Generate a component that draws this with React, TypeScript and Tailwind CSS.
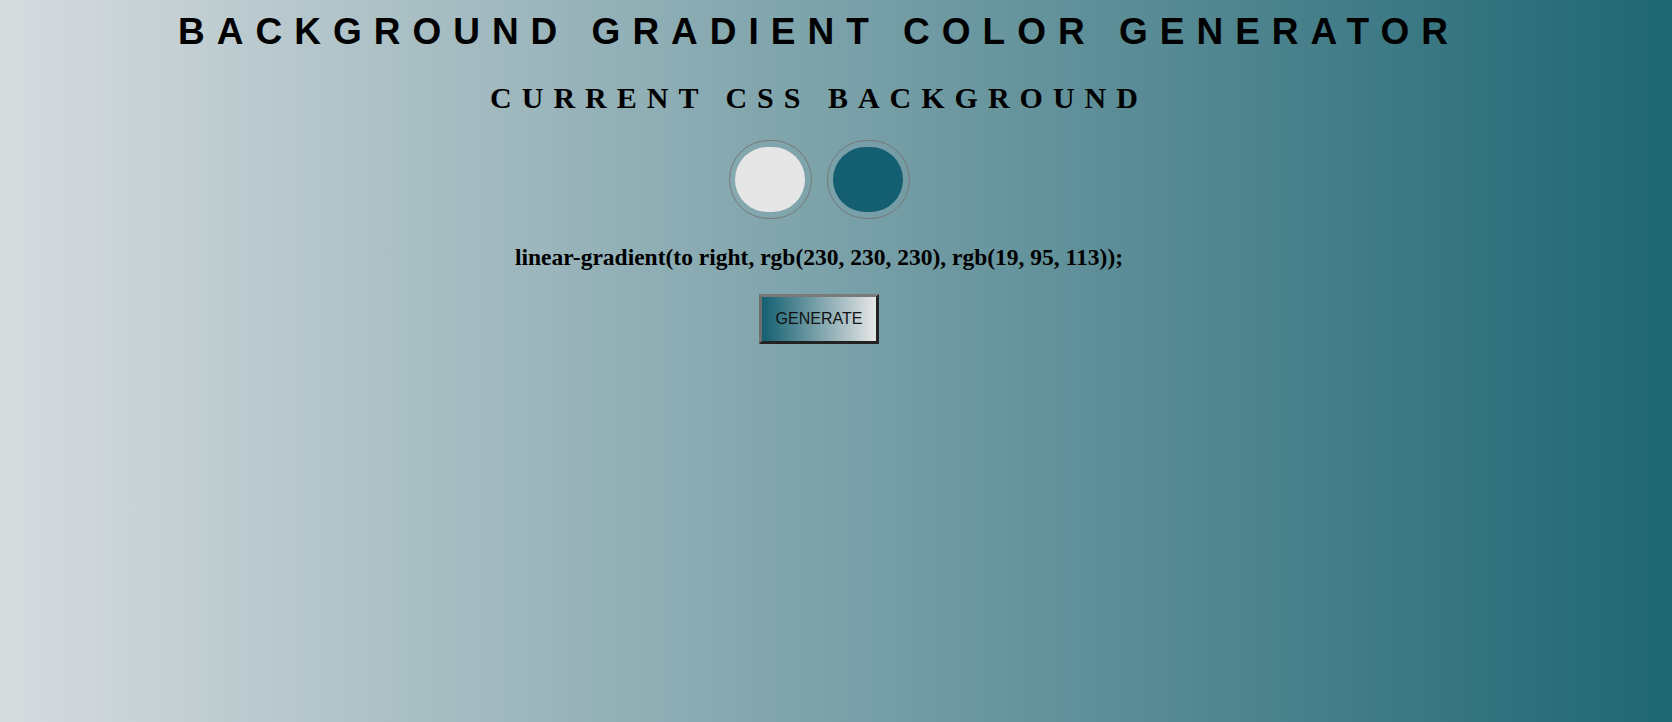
import React from "react";

export default function App() {
  return (
    <div className="w-full h-[722px] overflow-hidden bg-[linear-gradient(to_right,#d7dcdf,#1e6673)]">
      <div className="flex flex-col items-center pr-[34px]">
        <h1 className="mt-[11px] text-[37px] leading-[42px] font-bold tracking-[12px] text-black font-['Liberation_Sans',Arial,sans-serif]">
          BACKGROUND GRADIENT COLOR GENERATOR
        </h1>
        <h2 className="mt-[28px] text-[30px] leading-[34px] font-bold tracking-[10px] text-black font-['Liberation_Serif','Times_New_Roman',serif]">
          CURRENT CSS BACKGROUND
        </h2>
        <div className="mt-[25px] flex gap-[15px]">
          <div className="w-[83px] h-[79px] rounded-full border border-[#777777] flex items-center justify-center">
            <div className="w-[70px] h-[65px] rounded-full bg-[#e6e6e6]" />
          </div>
          <div className="w-[83px] h-[79px] rounded-full border border-[#777777] flex items-center justify-center">
            <div className="w-[70px] h-[65px] rounded-full bg-[#135f71]" />
          </div>
        </div>
        <h3 className="mt-[25px] text-[23.5px] leading-[26px] font-bold text-black font-['Liberation_Serif','Times_New_Roman',serif]">
          linear-gradient(to right, rgb(230, 230, 230), rgb(19, 95, 113));
        </h3>
        <button className="mt-[24px] w-[120px] h-[50px] border-[3px] border-t-[#7a7a7a] border-l-[#6e6e6e] border-r-[#222222] border-b-[#222222] bg-[linear-gradient(to_right,#135f71,#e6e6e6)] text-[16px] leading-[18px] text-[#111111] font-['Liberation_Sans',Arial,sans-serif]">
          GENERATE
        </button>
      </div>
    </div>
  );
}
